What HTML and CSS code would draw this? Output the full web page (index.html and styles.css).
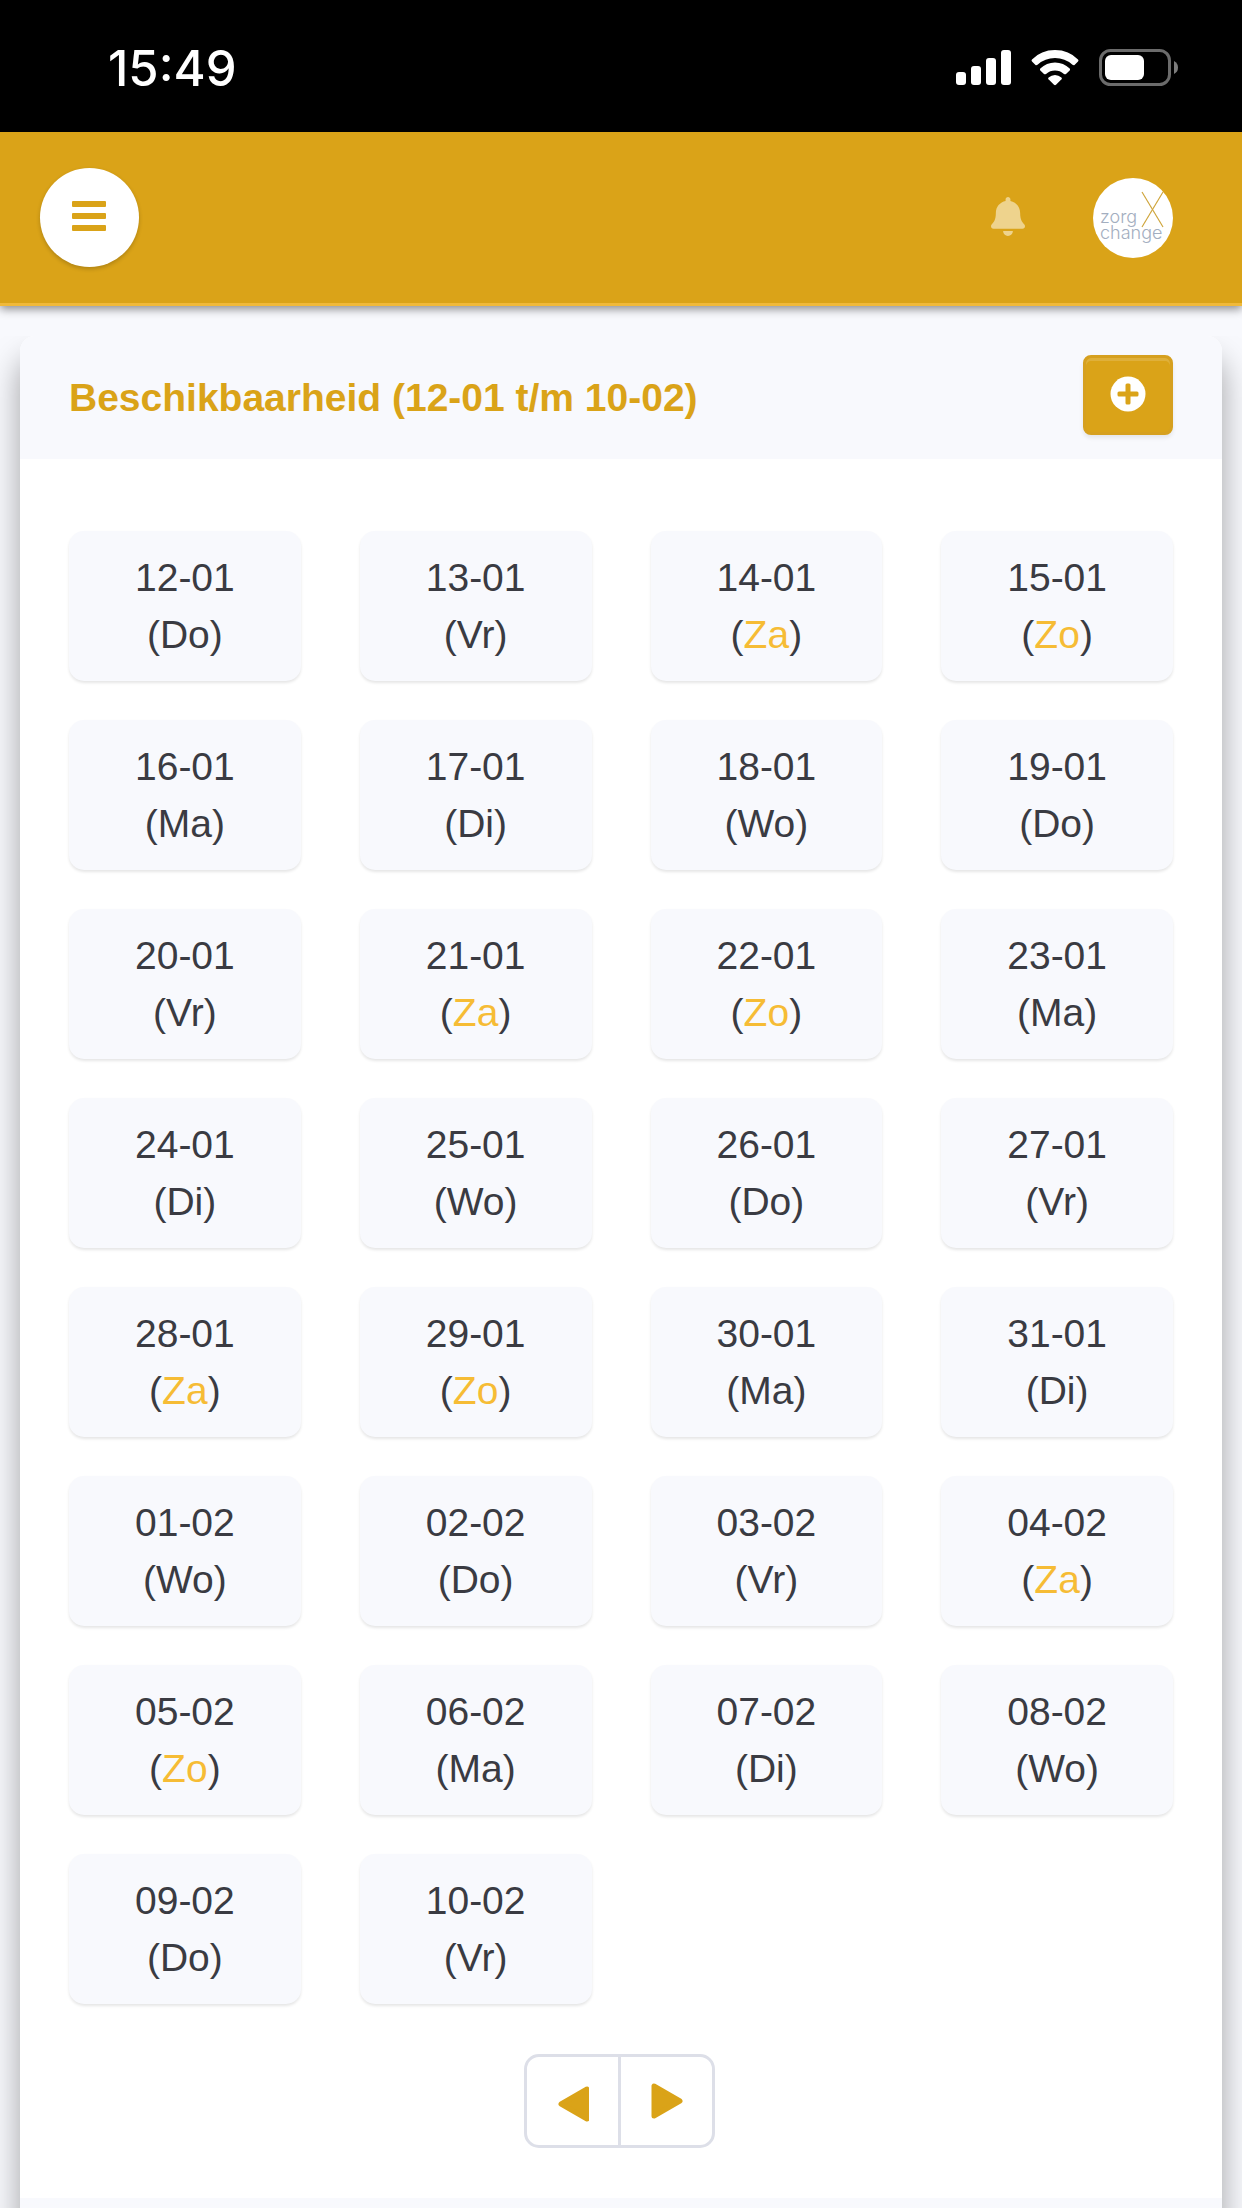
FILE: index.html
```html
<!DOCTYPE html>
<html lang="nl">
<head>
    <meta charset="UTF-8">
    <meta name="viewport" content="width=device-width, initial-scale=1.0">
    <title>Beschikbaarheid</title>
    <link rel="stylesheet" href="styles.css">
</head>
<body>
    <div class="status-bar">
        <span class="time">15:49</span>
        <div class="status-icons">
            <svg width="56" height="36" viewBox="0 0 56 36" fill="#fff">
                <rect x="1" y="22" width="10" height="13" rx="3"/>
                <rect x="16" y="16" width="10" height="19" rx="3"/>
                <rect x="31" y="8" width="10" height="27" rx="3"/>
                <rect x="46" y="0" width="10" height="35" rx="3"/>
            </svg>
            <svg width="48" height="36" viewBox="0 0 48 36" fill="#fff">
                <path d="M1 9.500Q10 0 24 0T47 9.500Q48 10.500 47 11.500L43.500 15Q42.500 15.500 41.500 14.700Q34 8 24 8T6.500 14.700Q5.500 15.500 4.500 15L1 11.500Q0 10.500 1 9.500Z"/>
                <path d="M9.300 18.500Q15.500 12.500 24 12.500T38.700 18.500Q39.500 19.500 38.700 20.400L35 24Q34 24.700 33 23.900Q29 20.500 24 20.500T15 23.900Q14 24.700 13 24L9.300 20.400Q8.500 19.500 9.300 18.500Z"/>
                <path d="M17.600 27.500Q20.500 25 24 25T30.400 27.500Q31.400 28.400 30.500 29.300L25 34.800Q24 35.700 23 34.800L17.500 29.300Q16.600 28.400 17.600 27.500Z"/>
            </svg>
            <svg width="80" height="38" viewBox="0 0 80 38">
                <rect x="1.500" y="1.500" width="69" height="34" rx="10" fill="none" stroke="#6b6b6b" stroke-width="3"/>
                <rect x="6" y="6" width="39" height="25" rx="6" fill="#fff"/>
                <path d="M75 12Q79 14 79 18.500T75 25Z" fill="#7c7c7c"/>
            </svg>
        </div>
    </div>

    <header class="topbar">
        <button class="menu-btn" type="button" aria-label="Menu">
            <svg width="35" height="30" viewBox="0 0 35 30" fill="#daa318">
                <rect width="34" height="6" rx="1"/>
                <rect y="12" width="34" height="6" rx="1"/>
                <rect y="24" width="34" height="6" rx="1"/>
            </svg>
        </button>
        <nav class="topbar-nav">
            <a href="#" class="bell" aria-label="Meldingen">
                <svg width="34" height="39" viewBox="0 0 448 512" fill="#eed38d">
                    <path d="M224 512c35.320 0 63.970-28.650 63.970-64H160.030c0 35.350 28.650 64 63.970 64zm215.390-149.710c-19.320-20.760-55.470-51.990-55.470-154.290 0-77.700-54.480-139.900-127.940-155.160V32c0-17.670-14.320-32-31.980-32s-31.980 14.330-31.980 32v20.840C118.560 68.100 64.080 130.300 64.080 208c0 102.300-36.150 133.530-55.470 154.290-6 6.450-8.660 14.160-8.610 21.710.110 16.400 12.980 32 32.100 32h383.800c19.120 0 32-15.600 32.100-32 .050-7.550-2.610-15.270-8.610-21.710z"/>
                </svg>
            </a>
            <a href="#" class="avatar" aria-label="Profiel">
                <svg width="80" height="80" viewBox="0 0 80 80">
                    <g stroke="#cfa53c" stroke-width="1.200">
                        <path d="M49 14L70 49"/>
                        <path d="M70 14L49 49"/>
                    </g>
                    <text x="7" y="45" class="logo-text">zorg</text>
                    <text x="7" y="61" class="logo-text">change</text>
                </svg>
            </a>
        </nav>
    </header>

    <main>
        <section class="card">
            <div class="card-header">
                <h1>Beschikbaarheid (12-01 t/m 10-02)</h1>
                <button class="add-btn" type="button" aria-label="Toevoegen">
                    <svg width="36" height="36" viewBox="0 0 36 36">
                        <circle cx="18" cy="18" r="17.500" fill="#fff"/>
                        <path d="M17 7.500h2q1.500 0 1.500 1.500v6.500H27q1.500 0 1.500 1.500v2q0 1.500-1.500 1.500h-6.500V27q0 1.500-1.500 1.500h-2q-1.500 0-1.500-1.500v-6.500H9q-1.500 0-1.500-1.500v-2q0-1.500 1.500-1.500h6.500V9q0-1.500 1.500-1.500z" fill="#daa318"/>
                    </svg>
                </button>
            </div>
            <div class="card-body">
                <ul class="days">
                    <li class="day">12-01<br>(Do)</li>
                    <li class="day">13-01<br>(Vr)</li>
                    <li class="day">14-01<br>(<span class="weekend">Za</span>)</li>
                    <li class="day">15-01<br>(<span class="weekend">Zo</span>)</li>
                    <li class="day">16-01<br>(Ma)</li>
                    <li class="day">17-01<br>(Di)</li>
                    <li class="day">18-01<br>(Wo)</li>
                    <li class="day">19-01<br>(Do)</li>
                    <li class="day">20-01<br>(Vr)</li>
                    <li class="day">21-01<br>(<span class="weekend">Za</span>)</li>
                    <li class="day">22-01<br>(<span class="weekend">Zo</span>)</li>
                    <li class="day">23-01<br>(Ma)</li>
                    <li class="day">24-01<br>(Di)</li>
                    <li class="day">25-01<br>(Wo)</li>
                    <li class="day">26-01<br>(Do)</li>
                    <li class="day">27-01<br>(Vr)</li>
                    <li class="day">28-01<br>(<span class="weekend">Za</span>)</li>
                    <li class="day">29-01<br>(<span class="weekend">Zo</span>)</li>
                    <li class="day">30-01<br>(Ma)</li>
                    <li class="day">31-01<br>(Di)</li>
                    <li class="day">01-02<br>(Wo)</li>
                    <li class="day">02-02<br>(Do)</li>
                    <li class="day">03-02<br>(Vr)</li>
                    <li class="day">04-02<br>(<span class="weekend">Za</span>)</li>
                    <li class="day">05-02<br>(<span class="weekend">Zo</span>)</li>
                    <li class="day">06-02<br>(Ma)</li>
                    <li class="day">07-02<br>(Di)</li>
                    <li class="day">08-02<br>(Wo)</li>
                    <li class="day">09-02<br>(Do)</li>
                    <li class="day">10-02<br>(Vr)</li>
                </ul>
                <div class="pagination">
                    <button type="button" class="page-btn" aria-label="Vorige">
                        <svg width="32" height="42" viewBox="0 0 32 42">
                            <path d="M30 9v30L4 24z" fill="#daa318" stroke="#daa318" stroke-width="5" stroke-linejoin="round"/>
                        </svg>
                    </button>
                    <button type="button" class="page-btn" aria-label="Volgende">
                        <svg width="32" height="42" viewBox="0 0 32 42">
                            <path d="M3 6v30l26-15z" fill="#daa318" stroke="#daa318" stroke-width="5" stroke-linejoin="round"/>
                        </svg>
                    </button>
                </div>
            </div>
            <div class="card-footer"></div>
        </section>
    </main>
</body>
</html>
```
FILE: styles.css
```css
* {
    box-sizing: border-box;
}

body {
    font-family: "Liberation Sans", Arial, sans-serif;
    font-size: 39px;
    margin: 0;
    background-color: #f8f9fd;
    color: #3a3b42;
    overflow: hidden;
}

button {
    padding: 0;
    border: none;
    cursor: pointer;
}

svg {
    display: block;
}

/* Status bar */
.status-bar {
    display: flex;
    justify-content: space-between;
    align-items: center;
    height: 132px;
    padding: 4px 63px 0 108px;
    background-color: #000;
    color: #fff;
}

.time {
    font-family: Inter, sans-serif;
    font-size: 49px;
    font-weight: 500;
}

.status-icons {
    display: flex;
    align-items: center;
    gap: 20px;
}

/* Top bar */
.topbar {
    position: relative;
    display: flex;
    justify-content: space-between;
    align-items: center;
    height: 174px;
    padding: 0 69px 0 40px;
    background-color: #daa318;
    border-bottom: 3px solid #f0b93a;
    box-shadow: 0 3px 9px rgba(0, 0, 0, 0.45);
}

.menu-btn {
    display: flex;
    justify-content: center;
    align-items: center;
    width: 99px;
    height: 99px;
    padding-bottom: 3px;
    border-radius: 50%;
    background-color: #fff;
    box-shadow: 0 2px 4px rgba(0, 0, 0, 0.2);
}

.topbar-nav {
    display: flex;
    align-items: center;
    gap: 68px;
}

.bell {
    padding-bottom: 3px;
}

.avatar {
    border-radius: 50%;
    background-color: #fff;
}

.logo-text {
    font-family: Inter, sans-serif;
    font-size: 18px;
    font-weight: 300;
    fill: #a3aec0;
}

/* Card */
main {
    margin-top: 30px;
    padding: 0 20px;
    overflow: hidden;
}

.card {
    background-color: #fff;
    border-radius: 15px;
    box-shadow: 0 24px 32px rgba(0, 0, 0, 0.36);
}

.card-header {
    display: flex;
    justify-content: space-between;
    align-items: flex-start;
    height: 123px;
    padding: 19px 49px 0;
    border-radius: 15px 15px 0 0;
    background-color: #f8f9fd;
}

.card-header h1 {
    margin: 0;
    font-size: 39px;
    line-height: 86px;
    color: #daa318;
}

.add-btn {
    display: flex;
    justify-content: center;
    align-items: center;
    width: 90px;
    height: 80px;
    padding-bottom: 3px;
    border: 3px solid #d6a01f;
    border-radius: 8px;
    background-color: #daa318;
    box-shadow: inset 0 3px 0 rgba(255, 255, 255, 0.15), 0 3px 4px rgba(0, 0, 0, 0.08);
}

.card-body {
    padding: 72px 49px 50px;
}

.days {
    display: grid;
    grid-template-columns: repeat(4, 1fr);
    gap: 39px 59px;
    margin: 0;
    padding: 0;
    list-style: none;
}

.day {
    padding: 18px 0;
    border-radius: 15px;
    background-color: #f8f9fd;
    box-shadow: 0 2px 3px rgba(0, 0, 0, 0.1);
    line-height: 57px;
    text-align: center;
}

.weekend {
    color: #f6bc35;
}

.pagination {
    display: flex;
    justify-content: center;
    margin-top: 50px;
    padding-right: 3px;
}

.page-btn {
    display: flex;
    justify-content: center;
    align-items: center;
    width: 97px;
    height: 94px;
    border: 3px solid #dddfe8;
    background-color: #fff;
}

.page-btn:first-child {
    border-radius: 15px 0 0 15px;
}

.page-btn:last-child {
    margin-left: -3px;
    border-radius: 0 15px 15px 0;
}

.card-footer {
    height: 60px;
    background-color: #f8f9fd;
}
```
